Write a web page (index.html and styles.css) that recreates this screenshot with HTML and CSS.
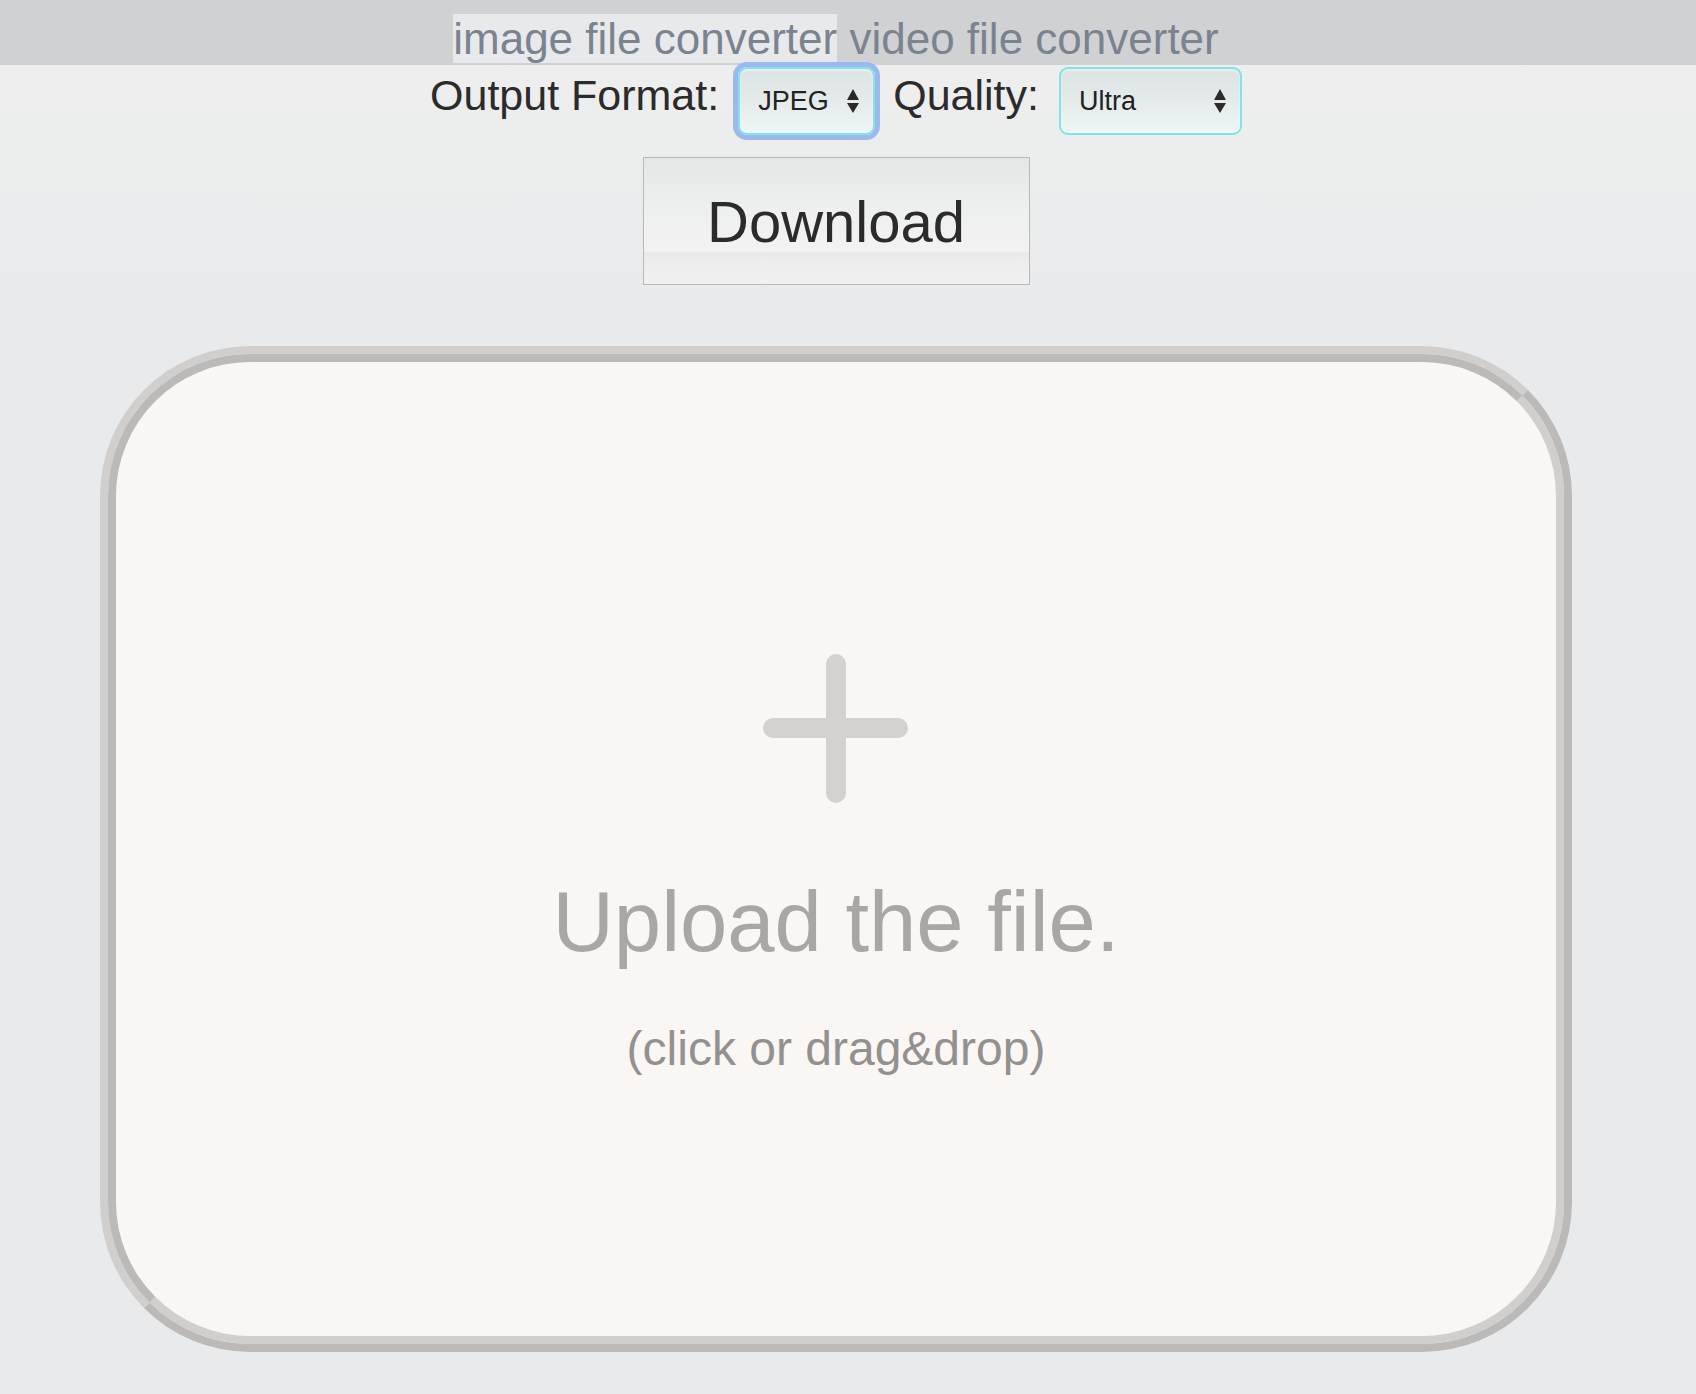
FILE: index.html
```html
<!DOCTYPE html>
<html lang="en">
<head>
<meta charset="utf-8">
<title>image file converter</title>
<link rel="stylesheet" href="styles.css">
</head>
<body>
<header class="topbar">
  <nav class="nav"><a class="nav-link is-active" href="#">image file converter</a> <a class="nav-link" href="#">video file converter</a></nav>
</header>
<main class="main">
  <div class="options">
    <label class="opt-label" for="fmt">Output Format:</label>
    <span class="select-wrap select-wrap--fmt is-focused">
      <select id="fmt" class="select">
        <option>JPEG</option>
        <option>PNG</option>
        <option>WEBP</option>
      </select>
      <svg class="select-arrows" width="12" height="24" viewBox="0 0 12 24" aria-hidden="true">
        <path d="M6 0 L12 11 L0 11 Z" fill="#2a2a2a"/>
        <path d="M0 14 L12 14 L6 24 Z" fill="#2a2a2a"/>
      </svg>
    </span>
    <label class="opt-label opt-label--quality" for="quality">Quality:</label>
    <span class="select-wrap select-wrap--quality">
      <select id="quality" class="select">
        <option>Ultra</option>
        <option>High</option>
        <option>Medium</option>
        <option>Low</option>
      </select>
      <svg class="select-arrows" width="12" height="24" viewBox="0 0 12 24" aria-hidden="true">
        <path d="M6 0 L12 11 L0 11 Z" fill="#2a2a2a"/>
        <path d="M0 14 L12 14 L6 24 Z" fill="#2a2a2a"/>
      </svg>
    </span>
  </div>
  <button class="download" type="button">Download</button>
  <div class="dropzone">
    <div class="dropzone-inner">
      <svg class="plus" width="150" height="150" viewBox="0 0 150 150" aria-hidden="true">
        <line x1="75" y1="11" x2="75" y2="140" stroke="#d3d2d0" stroke-width="20" stroke-linecap="round"/>
        <line x1="12" y1="75" x2="137" y2="75" stroke="#d3d2d0" stroke-width="20" stroke-linecap="round"/>
      </svg>
      <p class="upload-title">Upload the file.</p>
      <p class="upload-hint">(click or drag&amp;drop)</p>
    </div>
  </div>
</main>
</body>
</html>
```
FILE: styles.css
```css
* {
  box-sizing: border-box;
}

html, body {
  margin: 0;
  padding: 0;
}

body {
  font-family: "Liberation Sans", Arial, Helvetica, sans-serif;
  background: linear-gradient(to bottom, #edeeed 65px, #e9eaec 320px, #e9eaec 100%);
  min-height: 1394px;
  color: #2b2b2b;
}

.topbar {
  height: 65px;
  background: #d0d1d3;
  padding-top: 14px;
}

.nav {
  width: 1672px;
  text-align: center;
  font-size: 44px;
  line-height: 49px;
  white-space: nowrap;
}

.nav-link {
  color: #7b8390;
  text-decoration: none;
}

.nav-link.is-active {
  background: #e8e9eb;
}

.main {
  width: 1672px;
}

.options {
  display: flex;
  justify-content: center;
  align-items: baseline;
  margin-top: 2px;
  height: 68px;
}

.opt-label {
  font-size: 43px;
  line-height: 50px;
  color: #2b2b2b;
  margin-right: 19px;
}

.opt-label--quality {
  margin-left: 18px;
  margin-right: 20px;
}

.select-wrap {
  position: relative;
  display: inline-block;
  border-radius: 9px;
}

.select-wrap.is-focused {
  box-shadow: 0 0 0 5px #9db8ee;
}

.select {
  -webkit-appearance: none;
  appearance: none;
  display: block;
  height: 68px;
  margin: 0;
  padding: 0 0 0 18px;
  border: 2px solid #7ee4e9;
  border-radius: 9px;
  background: linear-gradient(to bottom, #dce3e3 0%, #e4eaea 45%, #eef5f5 100%);
  box-shadow: inset 0 2px 2px rgba(255, 255, 255, 0.4), inset 0 -2px 2px rgba(255, 255, 255, 0.4);
  font-family: "Liberation Sans", Arial, Helvetica, sans-serif;
  font-size: 27px;
  color: #222;
  outline: none;
}

.select-wrap--fmt .select {
  width: 137px;
}

.select-wrap--quality .select {
  width: 183px;
}

.select-arrows {
  position: absolute;
  top: 22px;
  right: 16px;
  pointer-events: none;
}

.download {
  display: block;
  width: 387px;
  height: 128px;
  margin: 22px auto 0;
  padding: 0;
  border: 1px solid #b8b8b8;
  border-radius: 0;
  background: linear-gradient(to bottom, #e4e5e5 0%, #eeefef 40%, #f2f2f2 74%, #e9e9e9 75%, #eeeeee 85%, #f1f1f1 100%);
  font-family: "Liberation Sans", Arial, Helvetica, sans-serif;
  font-size: 58px;
  color: #2b2b2b;
  cursor: pointer;
}

.dropzone {
  width: 1472px;
  height: 1006px;
  margin: 61px auto 0;
  border: 8px solid;
  border-color: #d0cfcd #bbbab8 #bbbab8 #d0cfcd;
  border-radius: 150px;
}

.dropzone-inner {
  height: 100%;
  border: 8px solid;
  border-color: #bbbab8 #d0cfcd #d0cfcd #bbbab8;
  border-radius: 142px;
  background: #f9f6f3;
  padding-top: 291px;
  text-align: center;
}

.plus {
  display: block;
  margin: 0 auto;
}

.upload-title {
  margin: 69px 0 0;
  font-size: 85px;
  line-height: 99px;
  color: #a8a7a5;
}

.upload-hint {
  margin: 50px 0 0;
  font-size: 48px;
  line-height: 55px;
  color: #929190;
}
```
